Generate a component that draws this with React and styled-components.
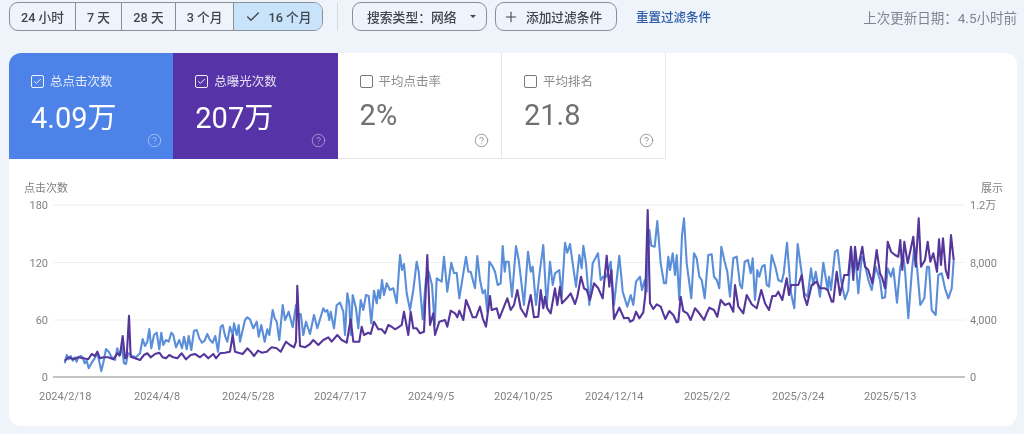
import React from "react";
import styled, { createGlobalStyle } from "styled-components";
import { Check, Plus, CircleHelp } from "lucide-react";

const FONT = `Roboto, "Noto Sans CJK SC", sans-serif`;

const Global = createGlobalStyle`
  html, body { margin: 0; padding: 0; background: #eff3fa; }
  body { width: 1024px; height: 434px; overflow: hidden; font-family: ${FONT}; }
`;

const Page = styled.div`
  display: flex;
  flex-direction: column;
  width: 1024px;
  height: 434px;
  padding: 2px 7px 0 9px;
  box-sizing: border-box;
  filter: blur(0.4px);
`;

const Toolbar = styled.div`
  display: flex;
  align-items: center;
  height: 29px;
  margin-bottom: 22px;
`;

const Segments = styled.div`
  display: flex;
  width: 314px;
  height: 29px;
  box-sizing: border-box;
  border: 1px solid #868f9a;
  border-radius: 9px;
  overflow: hidden;
`;

const Segment = styled.div`
  display: flex;
  align-items: center;
  justify-content: center;
  gap: 8px;
  box-sizing: border-box;
  flex: 0 0 ${(p) => p.$w}px;
  font-size: 12.7px;
  font-weight: 500;
  color: #3f464f;
  background: ${(p) => (p.$on ? "#c8e3fa" : "transparent")};
  border-right: ${(p) => (p.$last ? "none" : "1px solid #868f9a")};
`;

const Divider = styled.div`
  width: 1px;
  height: 28px;
  margin: 0 14px;
  background: #d5dae1;
`;

const Pill = styled.div`
  display: flex;
  align-items: center;
  box-sizing: border-box;
  width: ${(p) => p.$w}px;
  height: 29px;
  padding-left: ${(p) => p.$pad}px;
  margin-right: ${(p) => p.$mr || 0}px;
  gap: ${(p) => p.$gap}px;
  border: 1px solid #868f9a;
  border-radius: 9px;
  font-size: ${(p) => p.$fs}px;
  font-weight: 500;
  color: #3f464f;
  white-space: nowrap;
`;

const Caret = styled.span`
  width: 0;
  height: 0;
  border-left: 3.5px solid transparent;
  border-right: 3.5px solid transparent;
  border-top: 3.5px solid #3f464f;
`;

const ResetLink = styled.div`
  margin-left: 19px;
  font-size: 12.5px;
  font-weight: 500;
  color: #2f5ea8;
  white-space: nowrap;
`;

const Updated = styled.div`
  margin-left: auto;
  font-size: 13.5px;
  color: #7f858d;
  white-space: nowrap;
`;

const Card = styled.div`
  width: 1008px;
  height: 373px;
  background: #fff;
  border-radius: 12px;
  overflow: hidden;
`;

const Tabs = styled.div`
  display: flex;
  height: 106px;
`;

const Tab = styled.div`
  display: flex;
  flex-direction: column;
  box-sizing: border-box;
  width: 164.3px;
  padding: 22px 11.5px 11px 22px;
  background: ${(p) => p.$bg || "#fff"};
  color: ${(p) => (p.$bg ? "#fff" : "#6f7072")};
  border-bottom: ${(p) => (p.$bg ? "none" : "1px solid #e6e6e6")};
  border-right: ${(p) => (p.$bg ? "none" : "1px solid #e6e6e6")};
`;

const TabLabel = styled.div`
  display: flex;
  align-items: center;
  gap: 6px;
  height: 13px;
  font-size: 12.5px;
  line-height: 13px;
  color: ${(p) => (p.$on ? "rgba(255,255,255,0.85)" : "#8b8c8e")};
`;

const Box = styled.span`
  display: flex;
  align-items: center;
  justify-content: center;
  box-sizing: border-box;
  width: 13px;
  height: 13px;
  border: 1.3px solid ${(p) => (p.$on ? "rgba(255,255,255,0.9)" : "#77787a")};
  border-radius: 2px;
`;

const TabValue = styled.div`
  margin-top: ${(p) => (p.$on ? 15 : 12)}px;
  font-size: 29px;
  line-height: 30px;
  font-weight: 400;
`;

const TabFoot = styled.div`
  display: flex;
  justify-content: flex-end;
  margin-top: auto;
  margin-bottom: ${(p) => (p.$on ? 0 : -1)}px;
  opacity: ${(p) => (p.$on ? 0.5 : 0.85)};
  color: ${(p) => (p.$on ? "#fff" : "#808080")};
`;

const Chart = styled.svg`
  display: block;
  width: 1008px;
  height: 267px;
  font-family: ${FONT};
`;

const AxisText = styled.text`
  font-size: 11px;
  fill: #7f8184;
`;

const trace = (ox, oy, pts) => pts.map(([x, y]) => `${(ox + x / 3).toFixed(1)},${(oy + y / 3).toFixed(1)}`);

const blue = [
  ...trace(60, 270, [[14,280],[20,255],[26,268],[32,258],[38,272],[44,262],[50,275],[55,262],[62,258],[68,262],[74,280],[80,272],[86,295],[95,278],[104,265],[112,250],[118,275],[124,303],[130,278],[138,237],[146,245],[155,262],[165,270],[172,235],[178,258],[186,232],[192,280],[198,282],[204,250],[210,252],[216,258],[228,262],[240,250],[248,207],[255,228],[262,215],[268,177],[274,235],[282,195],[290,188],[298,238],[304,188],[310,225],[318,210],[326,215],[334,188],[340,195],[348,232],[358,210],[366,235],[372,200],[380,238],[386,198],[394,240],[402,182],[410,180],[418,205],[426,218],[434,212],[442,192],[450,210],[458,218],[466,198],[474,245],[482,170],[488,165],[496,200],[502,215],[510,170],[518,195],[522,160],[530,195],[536,165]]),
  ...trace(230, 240, [[30,305],[38,270],[45,240],[52,232],[60,238],[70,265],[80,245],[86,290],[94,255],[104,305],[112,268],[118,285],[128,210],[134,235],[140,245],[148,300],[158,195],[165,240],[176,215],[188,262],[198,195],[205,225],[212,222],[220,285],[228,245],[240,282],[252,225],[262,265],[270,238],[280,205],[286,215],[292,210],[298,240],[302,215],[312,265],[320,195],[330,188],[340,215],[345,285],[352,160],[358,190],[362,285],[368,165],[378,205],[385,265],[392,180],[400,210],[408,165],[416,168],[424,250],[432,152],[440,190],[445,150],[450,175],[456,120],[462,165],[470,130],[480,150],[490,145],[500,190],[510,45],[516,90],[522,72],[530,160],[540,210]]),
  ...trace(400, 230, [[30,240],[40,180],[50,95],[56,125],[68,268],[78,145],[86,125],[96,165],[104,285],[110,145],[125,155],[132,80],[142,185],[154,98],[162,130],[170,128],[178,205],[198,80],[205,125],[212,125],[225,175],[232,78],[240,150],[248,190],[255,180],[262,245],[268,95],[278,110],[285,125],[293,165],[302,160],[308,48],[314,125],[318,95],[326,95],[336,200],[348,48],[356,90],[372,225],[384,65],[392,125],[398,110],[408,225],[420,120],[430,45],[440,230],[450,95],[458,165],[465,130],[478,120],[485,200],[495,38],[502,68],[510,42],[518,100],[528,170]]),
  ...trace(570, 205, [[28,150],[35,190],[40,122],[48,175],[58,300],[68,175],[84,145],[92,225],[100,215],[110,215],[122,170],[132,300],[148,152],[158,260],[172,305],[182,270],[190,300],[198,230],[210,215],[216,255],[224,225],[230,260],[238,75],[244,122],[254,125],[262,48],[272,175],[282,235],[288,235],[295,155],[300,195],[308,145],[315,210],[320,150],[328,285],[336,90],[342,40],[350,175],[364,280],[372,145],[380,160],[388,215],[395,225],[404,280],[415,150],[425,148],[432,215],[440,225],[448,250],[454,125],[464,170],[472,200],[480,275],[490,160],[500,155],[510,240],[516,250],[524,170],[534,165],[542,205],[548,160],[555,285],[562,195],[568,215],[576,185],[584,180]]),
  ...trace(765, 210, [[5,225],[12,230],[20,135],[32,175],[40,210],[50,215],[56,190],[66,98],[78,250],[88,295],[98,102],[110,190],[118,250],[128,260],[138,175],[145,225],[152,185],[165,260],[175,158],[188,240],[192,200],[198,240],[210,125],[218,120],[228,210],[240,268],[250,240],[258,115],[265,190],[272,150],[280,250],[290,140],[298,155],[310,210],[320,240],[332,170],[345,210],[352,265],[360,262],[368,175],[378,200],[385,175],[396,278],[406,170],[415,140],[420,180],[430,325],[440,190],[448,110],[456,170],[466,285],[478,265],[486,170],[492,170],[500,300],[512,315],[520,195],[530,190],[540,235],[550,265],[560,235],[566,150]]),
].join(" ");

const purple = [
  ...trace(60, 270, [[14,272],[26,262],[40,268],[55,262],[70,265],[85,268],[95,252],[105,258],[112,245],[120,265],[130,262],[145,262],[160,268],[172,250],[180,255],[188,198],[195,265],[200,262],[207,137],[212,260],[225,265],[240,270],[252,255],[262,250],[272,262],[285,252],[298,248],[308,262],[318,265],[328,255],[340,262],[352,265],[365,250],[378,268],[392,255],[405,252],[420,262],[432,252],[445,265],[460,252],[468,265],[480,250],[495,248],[510,245],[518,195],[525,245]]),
  ...trace(230, 240, [[25,338],[38,342],[52,325],[62,335],[72,348],[84,332],[95,338],[110,335],[125,322],[140,325],[152,335],[168,305],[180,315],[192,322],[198,305],[202,137],[210,318],[225,322],[240,312],[250,300],[265,315],[280,300],[295,292],[305,305],[322,285],[335,300],[350,308],[362,238],[370,305],[388,305],[395,260],[402,285],[415,278],[422,282],[432,245],[445,268],[455,268],[465,280],[475,255],[485,260],[495,268],[505,262],[515,255],[522,215]]),
  ...trace(400, 230, [[25,315],[32,245],[40,295],[50,295],[60,310],[72,305],[82,75],[90,285],[100,250],[105,315],[118,275],[135,270],[142,290],[152,242],[165,250],[172,262],[178,242],[190,270],[198,210],[210,240],[218,262],[228,262],[240,230],[248,265],[258,290],[270,198],[275,240],[290,235],[298,265],[310,235],[322,205],[332,240],[342,225],[352,180],[362,235],[378,260],[392,195],[402,262],[415,260],[422,180],[430,235],[435,200],[442,235],[452,250],[465,175],[472,225],[480,170],[486,220],[500,205],[512,190],[525,222]]),
  ...trace(570, 205, [[22,275],[33,215],[42,250],[50,255],[60,285],[72,235],[85,250],[98,280],[110,152],[118,245],[124,195],[132,342],[148,308],[162,340],[175,338],[180,350],[190,345],[198,320],[208,340],[220,322],[226,270],[233,15],[240,295],[250,312],[260,298],[272,305],[286,342],[298,318],[310,330],[320,352],[325,350],[332,275],[340,318],[352,325],[362,345],[375,310],[388,325],[402,345],[410,325],[418,308],[432,315],[442,335],[452,285],[465,300],[478,295],[490,320],[495,240],[505,305],[520,325],[530,270],[545,298],[560,310],[574,255],[585,295]]),
  ...trace(765, 210, [[12,300],[22,258],[32,258],[40,245],[52,270],[65,205],[72,255],[78,225],[100,225],[110,195],[118,260],[126,285],[140,225],[155,215],[165,235],[180,235],[188,240],[200,275],[205,275],[215,185],[225,255],[238,195],[250,195],[258,110],[265,210],[270,110],[278,180],[292,110],[300,170],[310,180],[322,220],[335,120],[345,190],[352,205],[360,235],[368,95],[378,125],[390,135],[400,140],[406,90],[412,180],[418,95],[428,160],[445,80],[452,170],[461,25],[468,170],[480,150],[488,95],[496,155],[505,130],[516,185],[522,88],[528,165],[534,85],[542,180],[550,205],[558,75],[566,150]]),
].join(" ");

const grid = [
  { y: 205, l: "180", r: "1.2万" },
  { y: 262.5, l: "120", r: "8,000" },
  { y: 320, l: "60", r: "4,000" },
  { y: 377, l: "0", r: "0", axis: true },
];

const dates = [
  ["2024/2/18", 39], ["2024/4/8", 134], ["2024/5/28", 222], ["2024/7/17", 314], ["2024/9/5", 408],
  ["2024/10/25", 494], ["2024/12/14", 585], ["2025/2/2", 684], ["2025/3/24", 772], ["2025/5/13", 864],
];

const metrics = [
  { label: "总点击次数", value: "4.09万", bg: "#4d82e8", on: true },
  { label: "总曝光次数", value: "207万", bg: "#5634a8", on: true },
  { label: "平均点击率", value: "2%" },
  { label: "平均排名", value: "21.8" },
];

export default function App() {
  return (
    <Page>
      <Global />
      <Toolbar>
        <Segments>
          <Segment $w={66}>24 小时</Segment>
          <Segment $w={46}>7 天</Segment>
          <Segment $w={54}>28 天</Segment>
          <Segment $w={58}>3 个月</Segment>
          <Segment $w={88} $on $last>
            <Check size={16} strokeWidth={2} />
            16 个月
          </Segment>
        </Segments>
        <Divider />
        <Pill $w={135} $pad={14} $gap={13} $mr={8} $fs={12.8}>
          搜索类型：网络
          <Caret />
        </Pill>
        <Pill $w={122} $pad={7} $gap={7} $fs={12.7}>
          <Plus size={16} strokeWidth={1.6} />
          添加过滤条件
        </Pill>
        <ResetLink>重置过滤条件</ResetLink>
        <Updated>上次更新日期：4.5小时前</Updated>
      </Toolbar>
      <Card>
        <Tabs>
          {metrics.map((m) => (
            <Tab key={m.label} $bg={m.bg}>
              <TabLabel $on={m.on}>
                <Box $on={m.on}>{m.on && <Check size={9} strokeWidth={2.4} color="#fff" />}</Box>
                {m.label}
              </TabLabel>
              <TabValue $on={m.on}>{m.value}</TabValue>
              <TabFoot $on={m.on}>
                <CircleHelp size={15} strokeWidth={1.5} />
              </TabFoot>
            </Tab>
          ))}
        </Tabs>
        <Chart viewBox="9 159 1008 267">
          <AxisText x="24" y="192">点击次数</AxisText>
          <AxisText x="1003" y="192" textAnchor="end">展示</AxisText>
          {grid.map((g) => (
            <g key={g.y}>
              <line x1="53" x2="965" y1={g.y} y2={g.y} stroke={g.axis ? "#c4c4c4" : "#f0f0f0"} strokeWidth={g.axis ? 1.8 : 1} />
              <AxisText x="48" y={g.y + 4} textAnchor="end">{g.l}</AxisText>
              <AxisText x="970" y={g.y + 4}>{g.r}</AxisText>
            </g>
          ))}
          {dates.map(([d, x]) => (
            <AxisText key={d} x={x} y="400">{d}</AxisText>
          ))}
          <polyline points={blue} fill="none" stroke="#5a8ed9" strokeWidth="2.1" strokeLinejoin="round" />
          <polyline points={purple} fill="none" stroke="#55369b" strokeWidth="2.1" strokeLinejoin="round" />
        </Chart>
      </Card>
    </Page>
  );
}
